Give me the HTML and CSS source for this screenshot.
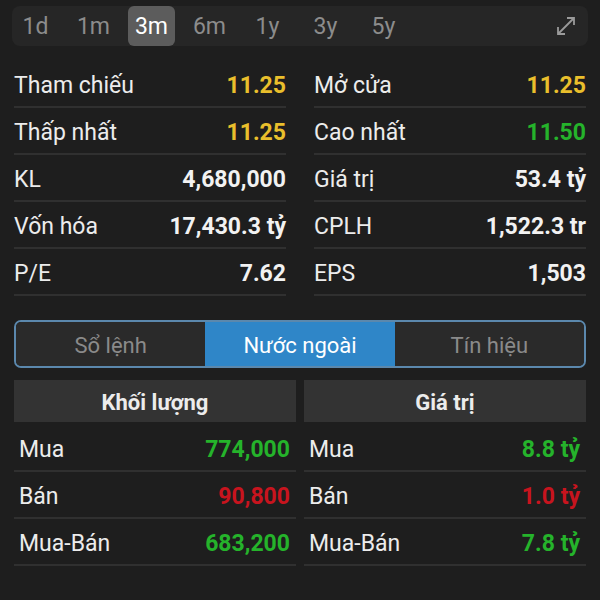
FILE: index.html
```html
<!DOCTYPE html>
<html>
  <head>
    <meta name="viewport" content="width=device-width, initial-scale=1.0">
    <link rel="stylesheet" href="styles.css">
    <title>Stock Overview</title>
  </head>
  <body>
    <!--Timeframe bar-->
    <div class="range-bar">
      <span class="range">1d</span>
      <span class="range">1m</span>
      <span class="range active">3m</span>
      <span class="range">6m</span>
      <span class="range">1y</span>
      <span class="range">3y</span>
      <span class="range">5y</span>
      <svg class="expand" width="22" height="22" viewBox="0 0 22 22">
        <path d="M3 19 L19 3 M12 3 H19 V10 M3 12 V19 H10" fill="none" stroke="#9a9a9a" stroke-width="1.8"/>
      </svg>
    </div>

    <!--Price stats-->
    <div class="stats">
      <div class="row"><span class="label">Tham chiếu</span><span class="value yellow">11.25</span></div>
      <div class="row"><span class="label">Mở cửa</span><span class="value yellow">11.25</span></div>
      <div class="row"><span class="label">Thấp nhất</span><span class="value yellow">11.25</span></div>
      <div class="row"><span class="label">Cao nhất</span><span class="value green">11.50</span></div>
      <div class="row"><span class="label">KL</span><span class="value">4,680,000</span></div>
      <div class="row"><span class="label">Giá trị</span><span class="value">53.4 tỷ</span></div>
      <div class="row"><span class="label">Vốn hóa</span><span class="value">17,430.3 tỷ</span></div>
      <div class="row"><span class="label">CPLH</span><span class="value">1,522.3 tr</span></div>
      <div class="row"><span class="label">P/E</span><span class="value">7.62</span></div>
      <div class="row"><span class="label">EPS</span><span class="value">1,503</span></div>
    </div>

    <!--Tabs-->
    <div class="tabs">
      <span class="tab">Sổ lệnh</span>
      <span class="tab active">Nước ngoài</span>
      <span class="tab">Tín hiệu</span>
    </div>

    <!--Foreign trading-->
    <div class="foreign">
      <div class="col">
        <div class="col-head">Khối lượng</div>
        <div class="frow"><span class="label">Mua</span><span class="value green">774,000</span></div>
        <div class="frow"><span class="label">Bán</span><span class="value red">90,800</span></div>
        <div class="frow"><span class="label">Mua-Bán</span><span class="value green">683,200</span></div>
      </div>
      <div class="col">
        <div class="col-head">Giá trị</div>
        <div class="frow"><span class="label">Mua</span><span class="value green">8.8 tỷ</span></div>
        <div class="frow"><span class="label">Bán</span><span class="value red">1.0 tỷ</span></div>
        <div class="frow"><span class="label">Mua-Bán</span><span class="value green">7.8 tỷ</span></div>
      </div>
    </div>
  </body>
</html>
```

FILE: styles.css
```css
body {
  margin: 0;
  background-color: #1e1e1e;
  font-family: Roboto, "Noto Sans", sans-serif;
  color: #ececec;
}

.range-bar {
  display: flex;
  align-items: center;
  gap: 11px;
  height: 40px;
  margin: 6px 12px 0;
  background-color: #262626;
  border-radius: 8px;
}

.range {
  width: 47px;
  height: 40px;
  line-height: 41px;
  text-align: center;
  font-size: 23px;
  color: #8c8c8c;
  border-radius: 6px;
}

.range.active {
  background-color: #5c5c5c;
  color: #ffffff;
}

.expand {
  margin-left: auto;
  margin-right: 11px;
}

.stats {
  display: grid;
  grid-template-columns: 1fr 1fr;
  column-gap: 28px;
  margin: 15px 14px 0;
}

.row {
  display: flex;
  justify-content: space-between;
  align-items: center;
  height: 41px;
  padding-top: 4px;
  border-bottom: 2px solid #303030;
  font-size: 23px;
}

.value {
  font-weight: bold;
  color: #f2f2f2;
}

.yellow {
  color: #e9bf2c;
}

.green {
  color: #25b32b;
}

.red {
  color: #c8141e;
}

.tabs {
  display: flex;
  margin: 24px 14px 0;
  height: 44px;
  border: 2px solid #5b88ad;
  border-radius: 7px;
  overflow: hidden;
}

.tab {
  flex: 1;
  text-align: center;
  line-height: 47px;
  font-size: 22px;
  color: #8a8a8a;
  background-color: #2a2a2a;
}

.tab.active {
  background-color: #2f86c8;
  color: #ffffff;
}

.foreign {
  display: flex;
  gap: 8px;
  margin: 12px 14px 0;
}

.col {
  flex: 1;
}

.col-head {
  height: 42px;
  line-height: 46px;
  text-align: center;
  font-size: 22px;
  font-weight: bold;
  background-color: #333333;
  margin-bottom: 3px;
}

.frow {
  display: flex;
  justify-content: space-between;
  align-items: center;
  height: 41px;
  padding: 4px 6px 0 5px;
  border-bottom: 2px solid #303030;
  font-size: 23px;
}
```
